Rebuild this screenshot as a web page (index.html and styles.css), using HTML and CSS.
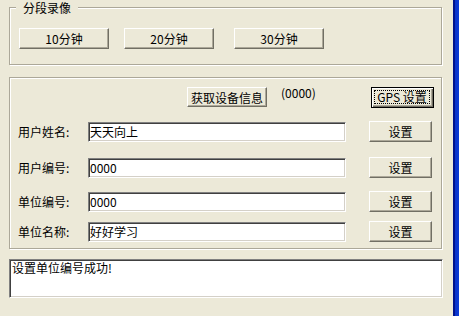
FILE: index.html
```html
<!DOCTYPE html>
<html lang="zh-CN">
<head>
  <meta charset="UTF-8" />
  <title>设备设置</title>
  <link rel="stylesheet" href="styles.css">
</head>
<body>
  <div class="window">
    <div class="client">
      <div class="group group-record">
        <span class="legend">分段录像</span>
        <div class="record-buttons">
          <button class="btn btn-record">10分钟</button>
          <button class="btn btn-record">20分钟</button>
          <button class="btn btn-record btn-30">30分钟</button>
        </div>
      </div>

      <div class="group group-info">
        <div class="row row-top">
          <button class="btn btn-info">获取设备信息</button>
          <span class="dev-id">(0000)</span>
          <button class="btn btn-gps"><span class="focus">GPS 设置</span></button>
        </div>
        <div class="row row-1">
          <label class="field-label">用户姓名:</label>
          <input class="field" type="text" value="天天向上" />
          <button class="btn btn-set">设置</button>
        </div>
        <div class="row row-2">
          <label class="field-label">用户编号:</label>
          <input class="field" type="text" value="0000" />
          <button class="btn btn-set">设置</button>
        </div>
        <div class="row row-3">
          <label class="field-label">单位编号:</label>
          <input class="field" type="text" value="0000" />
          <button class="btn btn-set">设置</button>
        </div>
        <div class="row row-4">
          <label class="field-label">单位名称:</label>
          <input class="field" type="text" value="好好学习" />
          <button class="btn btn-set">设置</button>
        </div>
      </div>

      <div class="message">设置单位编号成功!</div>
    </div>
    <div class="frame"></div>
  </div>
</body>
</html>
```

FILE: styles.css
```css
body {
  margin: 0;
  background: #ece9d8;
  font-family: "Noto Sans CJK SC", "Liberation Sans", sans-serif;
  font-size: 12px;
  color: #000;
}

.window {
  display: flex;
  width: 459px;
  height: 316px;
}

.client {
  width: 453px;
  padding: 7px 0 0 9px;
  box-sizing: border-box;
}

.frame {
  width: 6px;
  background: linear-gradient(to right, #00138c 0, #00138c 2px, #0a33c8 2px, #0b3bd6 100%);
}

/* etched group frame */
.group {
  position: relative;
  width: 433px;
  border: 1px solid #aca899;
  box-shadow: inset 1px 1px 0 #fff, 1px 1px 0 #fff;
  box-sizing: border-box;
}

.legend {
  position: absolute;
  top: -9px;
  left: 6px;
  padding: 0 7px;
  background: #ece9d8;
  line-height: 17px;
}

.group-record {
  height: 58px;
  padding: 20px 0 0 9px;
}

.record-buttons {
  display: flex;
  gap: 15px;
}

.btn {
  font-family: inherit;
  font-size: 12px;
  color: #000;
  background: #ece9d8;
  border: 1px solid;
  border-color: #fff #716f64 #716f64 #fff;
  box-shadow: inset -1px -1px 0 #aca899;
  padding: 0;
  margin: 0;
  height: 21px;
  line-height: 17px;
  box-sizing: border-box;
}

.btn-record {
  width: 90px;
}

.btn-30 {
  margin-left: 5px;
}

.group-info {
  height: 172px;
  margin-top: 12px;
  padding: 9px 7px 6px 8px;
}

.row {
  display: flex;
  align-items: center;
  height: 21px;
}

.row-1 { margin-top: 13px; }
.row-2 { margin-top: 15px; }
.row-3 { margin-top: 13px; }
.row-4 { margin-top: 9px; }

.btn-info {
  width: 80px;
  height: 20px;
  margin-left: 169px;
  align-self: flex-start;
}

.dev-id {
  margin-left: 14px;
  align-self: flex-start;
  line-height: 12px;
}

.btn-gps {
  width: 63px;
  margin-left: auto;
  border: 1px solid #000;
  box-shadow: inset 1px 1px 0 #fff, inset -1px -1px 0 #716f64, inset -2px -2px 0 #aca899;
  padding: 2px 3px 3px 2px;
}

.focus {
  display: block;
  border: 1px dotted #000;
  line-height: 12px;
}

.field-label {
  width: 70px;
}

.field {
  width: 258px;
  height: 20px;
  padding: 0 1px;
  margin: 0;
  font-family: inherit;
  font-size: 12px;
  background: #fff;
  border: 1px solid;
  border-color: #808080 #fff #fff #808080;
  box-shadow: inset 1px 1px 0 #404040, inset -1px -1px 0 #d4d0c8;
  box-sizing: border-box;
  outline: none;
}

.btn-set {
  width: 63px;
  margin-left: 23px;
}

.message {
  width: 434px;
  height: 39px;
  margin-top: 10px;
  padding: 1px 2px;
  background: #fff;
  border: 1px solid;
  border-color: #808080 #fff #fff #808080;
  box-shadow: inset 1px 1px 0 #404040, inset -1px -1px 0 #d4d0c8;
  box-sizing: border-box;
  line-height: 14px;
}
```
